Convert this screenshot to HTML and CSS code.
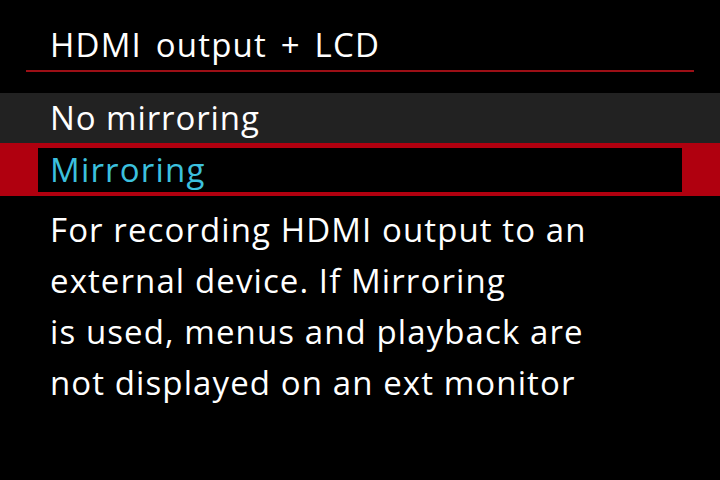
FILE: index.html
```html
<!DOCTYPE html>
<html>
<head>
    <title>HDMI output + LCD</title>
    <link rel="stylesheet" href="styles.css">
</head>
<body>
    <div class="screen">
        <div class="header">
            <h1 class="title">HDMI output + LCD</h1>
        </div>

        <ul class="options">
            <li class="option">No mirroring</li>
            <li class="option selected"><span class="option-box">Mirroring</span></li>
        </ul>

        <p class="help">For recording HDMI output to an<br>external device. If Mirroring<br>is used, menus and playback are<br>not displayed on an ext monitor</p>
    </div>
</body>
</html>
```

FILE: styles.css
```css
html, body {
    margin: 0;
    padding: 0;
    background-color: #000;
}

.screen {
    width: 720px;
    height: 480px;
    overflow: hidden;
    font-family: "Open Sans", "Noto Sans", sans-serif;
    font-size: 33px;
    letter-spacing: 1.2px;
    color: #fff;
}

.header {
    margin: 0 26px;
    padding-top: 20px;
    border-bottom: 2px solid #9c0f16;
}

.title {
    margin: 0;
    padding-left: 24px;
    font-size: 33px;
    font-weight: normal;
    line-height: 50px;
    word-spacing: 4px;
}

.options {
    list-style: none;
    margin: 21px 0 0 0;
    padding: 0;
}

.option {
    height: 50px;
    padding-left: 50px;
    line-height: 50px;
    letter-spacing: 0.9px;
    background-color: #222;
}

.option.selected {
    height: auto;
    padding: 5px 38px 4px 38px;
    line-height: 44px;
    letter-spacing: 1.2px;
    background-color: #b0000f;
}

.option-box {
    display: block;
    padding-left: 12px;
    background-color: #000;
    color: #3cc0de;
}

.help {
    margin: 8px 0 0 0;
    padding-left: 50px;
    line-height: 51px;
    letter-spacing: 1.1px;
}
```
